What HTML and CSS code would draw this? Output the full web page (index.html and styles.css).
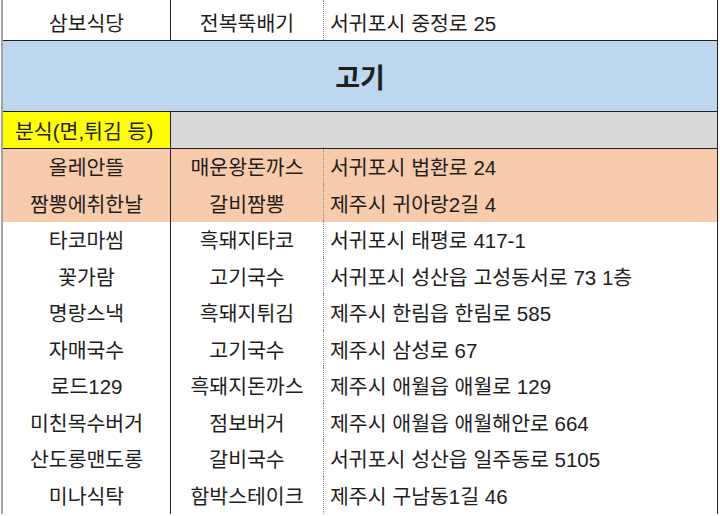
FILE: index.html
```html
<!DOCTYPE html>
<html lang="ko">
<head>
<meta charset="utf-8">
<link rel="stylesheet" href="styles.css">
</head>
<body>
<div class="sheet">
  <div class="row first">
    <div class="c1">삼보식당</div><div class="c2">전복뚝배기</div><div class="c3">서귀포시 중정로 25</div>
  </div>
  <div class="row cat">고기</div>
  <div class="row sub">
    <div class="c1 yellow">분식(면,튀김 등)</div><div class="gray"></div>
  </div>
  <div class="row data salmon">
    <div class="c1">올레안뜰</div><div class="c2">매운왕돈까스</div><div class="c3">서귀포시 법환로 24</div>
  </div>
  <div class="row data salmon">
    <div class="c1">짬뽕에취한날</div><div class="c2">갈비짬뽕</div><div class="c3">제주시 귀아랑2길 4</div>
  </div>
  <div class="row data">
    <div class="c1">타코마씸</div><div class="c2">흑돼지타코</div><div class="c3">서귀포시 태평로 417-1</div>
  </div>
  <div class="row data">
    <div class="c1">꽃가람</div><div class="c2">고기국수</div><div class="c3">서귀포시 성산읍 고성동서로 73 1층</div>
  </div>
  <div class="row data">
    <div class="c1">명랑스낵</div><div class="c2">흑돼지튀김</div><div class="c3">제주시 한림읍 한림로 585</div>
  </div>
  <div class="row data">
    <div class="c1">자매국수</div><div class="c2">고기국수</div><div class="c3">제주시 삼성로 67</div>
  </div>
  <div class="row data">
    <div class="c1">로드129</div><div class="c2">흑돼지돈까스</div><div class="c3">제주시 애월읍 애월로 129</div>
  </div>
  <div class="row data">
    <div class="c1">미친목수버거</div><div class="c2">점보버거</div><div class="c3">제주시 애월읍 애월해안로 664</div>
  </div>
  <div class="row data">
    <div class="c1">산도롱맨도롱</div><div class="c2">갈비국수</div><div class="c3">서귀포시 성산읍 일주동로 5105</div>
  </div>
  <div class="row data">
    <div class="c1">미나식탁</div><div class="c2">함박스테이크</div><div class="c3">제주시 구남동1길 46</div>
  </div>
</div>
</body>
</html>
```

FILE: styles.css
```css
html, body {
  margin: 0;
  padding: 0;
  background: #ffffff;
}
body {
  font-family: "Liberation Sans", "Noto Sans CJK KR", sans-serif;
  font-size: 20.5px;
  color: #1e1e1e;
  overflow: hidden;
  height: 516px;
}
.sheet {
  margin-left: 1px;
  width: 714px;
  border-left: 2px solid #a3a3a3;
  border-right: 1px solid #222;
}
.row {
  display: grid;
  grid-template-columns: 168px 153px 1fr;
}
.c1, .c2, .c3 {
  display: flex;
  align-items: center;
  white-space: nowrap;
}
.c1 {
  justify-content: center;
  border-right: 1px solid #222;
}
.c2 {
  justify-content: center;
  border-right: 1px dotted #8a8a8a;
}
.c3 {
  padding-left: 6px;
}
.first {
  height: 40px;
}
.first > div {
  padding-top: 3px;
}
.cat {
  display: flex;
  align-items: center;
  justify-content: center;
  height: 70px;
  background: #bdd7ee;
  border-top: 1px solid #222;
  border-bottom: 1px solid #222;
  font-size: 27px;
  font-weight: 700;
}
.sub {
  grid-template-columns: 168px 1fr;
  height: 36px;
  border-bottom: 1px solid #222;
}
.yellow {
  background: #ffff00;
  justify-content: flex-start;
  padding-left: 12px;
}
.gray {
  background: #d9d9d9;
}
.data {
  height: 36.5px;
}
.data > div {
  padding-top: 0;
  margin-top: -2px;
}
.salmon {
  background: #f8cbad;
}
```
